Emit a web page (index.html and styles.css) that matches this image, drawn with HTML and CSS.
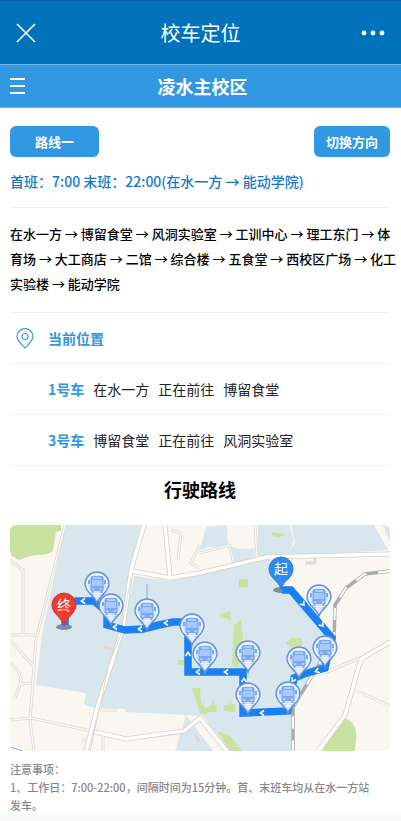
FILE: index.html
```
<!DOCTYPE html>
<html lang="zh-CN">
<head>
    <meta charset="UTF-8">
    <meta name="viewport" content="width=device-width, initial-scale=1.0">
    <title>校车定位</title>
    <link rel="stylesheet" href="styles.css">
</head>
<body>
    <header class="app-bar">
        <button class="icon-btn" aria-label="关闭">
            <svg width="20" height="20" viewBox="0 0 20 20"><path d="M1 1L19 19M19 1L1 19" stroke="#fff" stroke-width="1.6"/></svg>
        </button>
        <h1 class="app-title">校车定位</h1>
        <button class="icon-btn" aria-label="更多">
            <svg width="24" height="6" viewBox="0 0 24 6" fill="#fff"><circle cx="3" cy="3" r="2.4"/><circle cx="12" cy="3" r="2.4"/><circle cx="21" cy="3" r="2.4"/></svg>
        </button>
    </header>
    <nav class="campus-bar">
        <button class="icon-btn" aria-label="菜单">
            <svg width="15" height="16" viewBox="0 0 15 16"><path d="M0 1H15M0 8H15M0 15H15" stroke="#fff" stroke-width="2"/></svg>
        </button>
        <h2 class="campus-title">凌水主校区</h2>
    </nav>
    <main class="content">
        <div class="actions">
            <button class="btn btn-route">路线一</button>
            <button class="btn btn-switch">切换方向</button>
        </div>
        <p class="schedule">首班：7:00 末班：22:00(在水一方 → 能动学院)</p>
        <div class="stops">
            <p>在水一方 → 博留食堂 → 风洞实验室 → 工训中心 → 理工东门 → 体育场 → 大工商店 → 二馆 → 综合楼 → 五食堂 → 西校区广场 → 化工实验楼 → 能动学院</p>
        </div>
        <div class="row">
            <svg class="pin-icon" width="18" height="21" viewBox="0 0 18 21" fill="none" stroke="#3a9ad9" stroke-width="1.2"><path d="M9 20C6 17 1 12.500 1 8.500A8 7.800 0 0 1 17 8.500C17 12.500 12 17 9 20Z"/><circle cx="9" cy="8.500" r="3"/></svg>
            <span class="bus">当前位置</span>
        </div>
        <div class="row">
            <span class="bus">1号车</span><span>在水一方</span><span>正在前往</span><span>博留食堂</span>
        </div>
        <div class="row">
            <span class="bus">3号车</span><span>博留食堂</span><span>正在前往</span><span>风洞实验室</span>
        </div>
        <h3 class="map-title">行驶路线</h3>
        <svg class="map" viewBox="10 525 380 226" role="img" aria-label="行驶路线">
            <defs>
                <g id="bus">
                    <path d="M0 19C-2 12 -12 8 -12 0A12 12 0 0 1 12 0C12 8 2 12 0 19Z" fill="#b4cffb" stroke="#6690d2" stroke-width="1.4"/>
                    <circle r="10" fill="#d3e3fd" stroke="#f4f8ff" stroke-width="1.3"/>
                    <path d="M-4 11L0 16L4 11" fill="#e3edff"/>
                    <path d="M-5.500 -8H5.500L6.500 -6V7H-6.500V-6Z" fill="#79a8f8"/>
                    <path d="M-4 -6H4M-5 5H-2.500M2.500 5H5" stroke="#e6efff"/>
                    <path d="M-5 -4H5L5.500 2H-5.500Z" fill="#a9c8fd"/>
                    <path d="M-8 -4V0M8 -4V0M-4.500 7V9M4.500 7V9" stroke="#79a8f8" stroke-width="2"/>
                </g>
                <path id="arrow" d="M2 -2.500L-1.500 0L2 2.500" fill="none" stroke="#fff" stroke-width="1.6"/>
            </defs>
            <rect x="10" y="525" width="380" height="226" fill="#faf7f0"/>
            <!-- water -->
            <g fill="#d8e6ed">
                <path d="M65 525H141L128 575L170 581L200 575L268 558L278 586L290 586L333 640L332 650L291 710V751H229L203 716L186 715L126 712L125 709L91 707L84 704L86 693L36 685L42 635Z"/>
                <path d="M186 715L213 751H175L179 738Z"/>
                <path d="M206 527L227 525L228 546L208 547L200 550Z"/>
                <path d="M228 546Q240 551 254 548L255 557L232 564Z"/>
                <path d="M258 525H289L294 540L289 553L268 556L257 559Z"/>
                <path d="M291 525H374L388 550L287 556L295 542Z"/>
                <path d="M383 525H390V543Z"/>
            </g>
            <!-- green areas -->
            <g fill="#c8e39f">
                <path d="M10 525H61V531L56 532L53 551L48 554L30 556L19 560L12 556L10 550Z"/>
                <path d="M272 532L284 534L285 536L276 537L272 535ZM239 579H248V587H239ZM219 615L230 611L231 621ZM234 625L241 620L243 640L239 668L232 666ZM286 643L292 638L302 638V646L290 647ZM178 660H185V665H178Z"/>
                <path d="M192 688L200 688L201 702L208 712L205 715L200 713ZM204 709L212 705L213 698L214 705L217 705V712L205 712ZM224 705L230 705V698L231 704L235 704V712L224 711Z"/>
                <path d="M344 718Q358 722 356 740L355 751H322ZM217 731L230 736L242 751H231Z"/>
            </g>
            <path d="M123 627L145 529V525H200V566L172 576L129 570Z" fill="#faf7f0"/>
            <!-- small roads -->
            <g fill="none" stroke="#dedad3" stroke-width="3">
                <path d="M65 525L36 640L30 720L34 751M10 560L23 570V635M10 635H36M10 640L34 667M10 662Q24 675 20 684L15 698M20 684L31 683M10 720L31 718L91 731M103 737V751M84 737V745M100 710H117M104 647L115 650M171 530L181 533L178 560M200 545L191 563L199 568M255 525L257 557M200 553L229 545L234 562M305 563H315V558M324 673L360 658M355 690L390 706M195 733L199 742"/>
            </g>
            <g fill="none" stroke="#faf8f3" stroke-width="1.4">
                <path d="M65 525L36 640L30 720L34 751M10 560L23 570V635M10 635H36M10 640L34 667M10 662Q24 675 20 684L15 698M20 684L31 683M10 720L31 718L91 731M103 737V751M84 737V745M100 710H117M171 530L181 533L178 560M200 545L191 563L199 568M255 525L257 557M200 553L229 545L234 562M324 673L360 658M355 690L390 706M377 525L390 550"/>
            </g>
            <!-- main roads -->
            <path d="M144 525L131 570L123 627L112 662L98 705L86 751M165 525L170 577M132 571L170 578L200 573L267 557L390 554M95 732L126 739L184 731L200 718L227 751M390 642L361 659L345 715L318 751" fill="none" stroke="#d5d1ca" stroke-width="5"/>
            <path d="M144 525L131 570L123 627L112 662L98 705L86 751M165 525L170 577M132 571L170 578L200 573L267 557L390 554M95 732L126 739L184 731L200 718L227 751M390 642L361 659L345 715L318 751" fill="none" stroke="#fff" stroke-width="3.400"/>
            <path d="M131 578L120 637L109 664L90 751" fill="none" stroke="#ddd9d2"/>
            <!-- railway -->
            <path d="M390 571L365 574L346 588L335 605L334 640L293 707V751" fill="none" stroke="#a9adaf" stroke-width="3.500"/>
            <path d="M390 571L365 574L346 588L335 605L334 640L293 707V751" fill="none" stroke="#fff" stroke-width="2" stroke-dasharray="12 12"/>
            <path d="M10 747L23 751M147 584V609" fill="none" stroke="#8caede"/>
            <!-- bus route -->
            <ellipse cx="64" cy="627" rx="8" ry="3" fill="#7f8d96"/>
            <ellipse cx="281" cy="590" rx="8" ry="3" fill="#7f8d96"/>
            <path d="M282 590L291 590L332 638L325 668L304 674L294 678L288 711L243 713V672H188V622H173L159 625L143 629L125 630L107 625V612L94 601L76 601L65 607V625" fill="none" stroke="#1c80f5" stroke-width="7.500"/>
            <use href="#arrow" transform="translate(83 601)"/>
            <use href="#arrow" transform="translate(115 627)"/>
            <use href="#arrow" transform="translate(140 629)"/>
            <use href="#arrow" transform="translate(166 623)"/>
            <use href="#arrow" transform="translate(188 654) rotate(90)"/>
            <use href="#arrow" transform="translate(198 672)"/>
            <use href="#arrow" transform="translate(226 672)"/>
            <use href="#arrow" transform="translate(244 680) rotate(90)"/>
            <use href="#arrow" transform="translate(262 713)"/>
            <use href="#arrow" transform="translate(293 680) rotate(-60)"/>
            <use href="#arrow" transform="translate(317 671) rotate(-18)"/>
            <use href="#arrow" transform="translate(303 604) rotate(230)"/>
            <use href="#arrow" transform="translate(322 625) rotate(230)"/>
            <use href="#bus" x="97" y="584"/>
            <use href="#bus" x="111" y="606"/>
            <use href="#bus" x="147" y="611"/>
            <use href="#bus" x="192" y="626"/>
            <use href="#bus" x="205" y="654"/>
            <use href="#bus" x="248" y="653"/>
            <use href="#bus" x="248" y="695"/>
            <use href="#bus" x="288" y="694"/>
            <use href="#bus" x="299" y="659"/>
            <use href="#bus" x="325" y="648"/>
            <use href="#bus" x="319" y="597"/>
            <path d="M64 626C62 617 52 614 52 605A12 12 0 0 1 76 605C76 614 66 617 64 626Z" fill="#f23a2f" stroke="#c93731"/>
            <path d="M281 589C279 581 269 578 269 569A12 12 0 0 1 293 569C293 578 283 581 281 589Z" fill="#2e8af4" stroke="#3478c9"/>
            <text class="marker" x="64" y="610">终</text>
            <text class="marker" x="281" y="574">起</text>
        </svg>
        <div class="notes">
            <p>注意事项：</p>
            <p>1、工作日：7:00-22:00，间隔时间为15分钟。首、末班车均从在水一方站发车。</p>
        </div>
    </main>
</body>
</html>
```
FILE: styles.css
```
* {
    box-sizing: border-box;
}
body {
    font-family: "Noto Sans CJK SC", sans-serif;
    margin: 0;
    background-color: #fafafa;
    color: #000;
}
h1, h2, h3, p {
    margin: 0;
}
button {
    font-family: inherit;
    border: 0;
    padding: 0;
    cursor: pointer;
}
svg {
    display: block;
}
.icon-btn {
    background: none;
}
.app-bar {
    display: grid;
    grid-template-columns: 24px 1fr 24px;
    align-items: center;
    height: 64px;
    padding: 0 16px;
    background-color: #0072bc;
    border-top: 1px solid #035ba4;
}
.app-title {
    font-size: 20px;
    font-weight: 400;
    text-align: center;
    color: #fff;
}
.campus-bar {
    display: grid;
    grid-template-columns: 16px 1fr 12px;
    align-items: center;
    height: 44px;
    padding: 0 10px;
    background-color: #3097e0;
    border-top: 1px solid #70b8e8;
    border-bottom: 1px solid #70b8e8;
}
.campus-title {
    font-size: 18px;
    line-height: 26px;
    text-align: center;
    color: #fff;
}
.content {
    padding: 18px 11px 0 10px;
    background-color: #fff;
}
.actions {
    display: flex;
    justify-content: space-between;
}
.btn {
    height: 31px;
    border-radius: 6px;
    background-color: #3097e0;
    color: #fff;
    font-size: 13px;
    font-weight: 700;
}
.btn-route {
    width: 89px;
}
.btn-switch {
    width: 76px;
}
.schedule {
    padding: 12px 0 14px;
    font-size: 14px;
    line-height: 24px;
    font-weight: 500;
    color: #1679be;
    border-bottom: 1px solid #f1f1f1;
}
.stops {
    padding: 13px 0 16px;
    font-size: 13px;
    line-height: 25px;
    font-weight: 500;
    border-bottom: 1px solid #f1f1f1;
}
.stops p {
    margin-right: -11px;
}
.row {
    position: relative;
    display: flex;
    align-items: center;
    gap: 9px;
    height: 51px;
    padding-left: 38px;
    font-size: 14px;
    color: #222;
    border-bottom: 1px solid #f1f1f1;
}
.pin-icon {
    position: absolute;
    left: 6px;
}
.bus {
    font-weight: 700;
    color: #3097e0;
}
.map-title {
    padding: 10px 0 23px;
    font-size: 18px;
    line-height: 26px;
    font-weight: 700;
    text-align: center;
}
.map {
    width: 100%;
    border-radius: 6px;
}
.marker {
    font-size: 14px;
    fill: #fff;
    text-anchor: middle;
}
.notes {
    padding: 9px 12px 0 0;
    font-size: 11px;
    line-height: 18px;
    font-weight: 500;
    color: #888;
}
```
